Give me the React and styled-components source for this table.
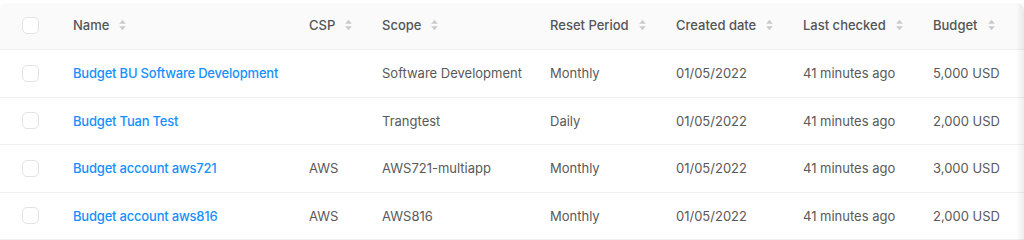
import React from "react";
import styled, { createGlobalStyle } from "styled-components";

const Global = createGlobalStyle`
  html, body { margin: 0; padding: 0; background: #fff; }
  body { font-family: Inter, "Noto Sans", sans-serif; }
`;

const Wrapper = styled.div`
  position: relative;
  padding-top: 3px;
  width: 1024px;
  overflow: hidden;
  &::after {
    content: "";
    position: absolute;
    top: 3px;
    right: 0;
    bottom: 0;
    width: 8px;
    background: linear-gradient(to right, rgba(0,0,0,0), rgba(0,0,0,0.07));
    border-top-right-radius: 8px;
  }
`;

const Table = styled.table`
  width: 1040px;
  border-collapse: separate;
  border-spacing: 0;
  table-layout: fixed;
  font-size: 13px;
  color: #595959;
`;

const HeadCell = styled.th`
  height: 47px;
  box-sizing: border-box;
  background: #fafafa;
  text-align: left;
  font-weight: 500;
  color: #555;
  padding: 0 0 2px ${(p) => p.$pl ?? 16}px;
  border-bottom: 1px solid #f0f0f0;
  white-space: nowrap;
  &:first-child { border-top-left-radius: 6px; }
`;

const Cell = styled.td`
  height: 47.5px;
  padding: 0 0 0 ${(p) => p.$pl ?? 16}px;
  border-bottom: 1px solid #f0f0f0;
  white-space: nowrap;
  color: #595959;
  box-sizing: border-box;
`;

const Label = styled.span`
  display: inline-flex;
  align-items: center;
  gap: 10px;
`;

const Check = styled.span`
  display: block;
  width: 15px;
  height: 15px;
  border: 1px solid #e3e3e3;
  border-radius: 5px;
  background: #fff;
`;

const Link = styled.a`
  color: #1890ff;
  font-weight: 500;
  letter-spacing: -0.2px;
  text-decoration: none;
`;

const SortIcon = () => (
  <svg width="7" height="12" viewBox="0 0 7 12" aria-hidden="true">
    <path d="M3.5 0.8 L6.8 4.8 H0.2 Z" fill="#cacaca" />
    <path d="M3.5 11.2 L6.8 7.2 H0.2 Z" fill="#cacaca" />
  </svg>
);

const columns = [
  { key: "name", title: "Name", width: 236 },
  { key: "csp", title: "CSP", width: 73 },
  { key: "scope", title: "Scope", width: 168 },
  { key: "reset", title: "Reset Period", width: 126 },
  { key: "created", title: "Created date", width: 127 },
  { key: "checked", title: "Last checked", width: 130 },
  { key: "budget", title: "Budget", width: 123 },
];

const rows = [
  { name: "Budget BU Software Development", csp: "", scope: "Software Development", reset: "Monthly", created: "01/05/2022", checked: "41 minutes ago", budget: "5,000 USD" },
  { name: "Budget Tuan Test", csp: "", scope: "Trangtest", reset: "Daily", created: "01/05/2022", checked: "41 minutes ago", budget: "2,000 USD" },
  { name: "Budget account aws721", csp: "AWS", scope: "AWS721-multiapp", reset: "Monthly", created: "01/05/2022", checked: "41 minutes ago", budget: "3,000 USD" },
  { name: "Budget account aws816", csp: "AWS", scope: "AWS816", reset: "Monthly", created: "01/05/2022", checked: "41 minutes ago", budget: "2,000 USD" },
];

export default function App() {
  return (
    <>
      <Global />
      <Wrapper>
        <Table>
          <colgroup>
            <col style={{ width: 57 }} />
            {columns.map((c) => (
              <col key={c.key} style={{ width: c.width }} />
            ))}
          </colgroup>
          <thead>
            <tr>
              <HeadCell $pl={22}>
                <Check />
              </HeadCell>
              {columns.map((c) => (
                <HeadCell key={c.key}>
                  <Label>
                    {c.title}
                    <SortIcon />
                  </Label>
                </HeadCell>
              ))}
            </tr>
          </thead>
          <tbody>
            {rows.map((r) => (
              <tr key={r.name}>
                <Cell $pl={22}>
                  <Check />
                </Cell>
                <Cell>
                  <Link href="#">{r.name}</Link>
                </Cell>
                <Cell>{r.csp}</Cell>
                <Cell>{r.scope}</Cell>
                <Cell>{r.reset}</Cell>
                <Cell>{r.created}</Cell>
                <Cell>{r.checked}</Cell>
                <Cell>{r.budget}</Cell>
              </tr>
            ))}
          </tbody>
        </Table>
      </Wrapper>
    </>
  );
}
